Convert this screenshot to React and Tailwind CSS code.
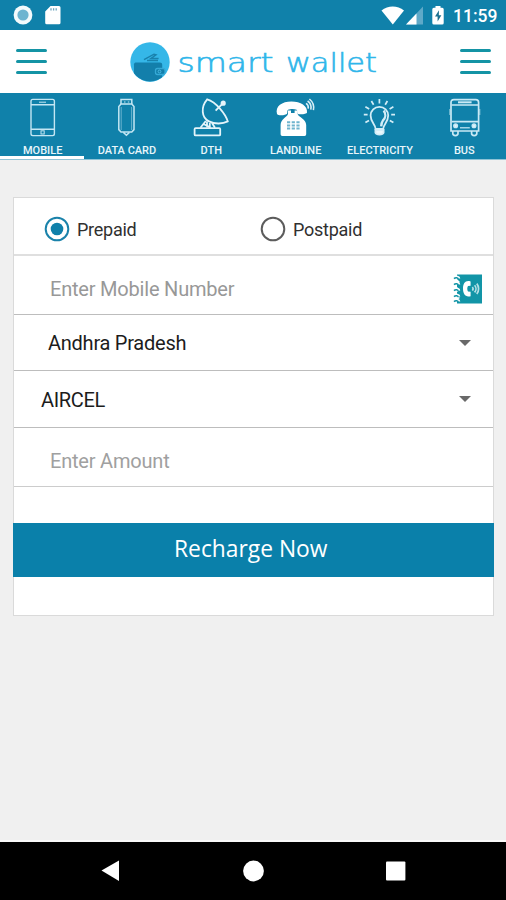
import React, { useState } from "react"

const MobileIcon = () => (
  <svg width="48" height="42" viewBox="0 0 48 42" fill="none" stroke="#c3e6f3" strokeWidth="1.4">
    <rect x="13" y="3.4" width="23.4" height="36.2" rx="1.8" />
    <path d="M13 8.8h23.4M13 33.2h23.4" />
    <path d="M21 6.2h7" strokeWidth="1" />
    <rect x="23" y="34.8" width="3.2" height="3.2" strokeWidth="1" />
  </svg>
)

const DataCardIcon = () => (
  <svg width="48" height="42" viewBox="0 0 48 42" fill="none" stroke="#c3e6f3" strokeWidth="1.5">
    <path d="M19 8V3.6h10.8V8" />
    <path d="M22 6h1.5M25.8 6h1.5" strokeWidth="1.2" />
    <path d="M19 8h10.8l2.2 2.6v23l-2.2 2.4H19l-2.2-2.4v-23z" />
    <path d="M19.2 11v23M29.6 11v23" strokeWidth="1" opacity="0.5" />
    <path d="M21.4 36.4l3 2.8 3-2.8" />
  </svg>
)

const DishIcon = () => (
  <svg width="48" height="42" viewBox="0 0 48 42" fill="none" stroke="#e4f4fa" strokeWidth="1.8">
    <path d="M20.2 3.4C13.6 11 14.4 21.6 22 25.4c6 3 13.6 2.6 18.8 0C38.5 18 29 6 20.2 3.4z" />
    <path d="M28.6 14.6l6.8-6.8" />
    <circle cx="36.2" cy="7.2" r="1.7" fill="#e4f4fa" />
    <path d="M18.8 25l-5.4 6.8M25 27l3 4.8M20 25.6v6M22.8 27v5M17 28.2l6.5 3.4" />
    <rect x="7.6" y="32.2" width="25.6" height="7.2" rx="1" />
  </svg>
)

const LandlineIcon = () => (
  <svg width="48" height="42" viewBox="0 0 48 42">
    <path
      d="M6 18C4 10 11 5.4 20.400 5.400s16.400 4.400 15.600 11.200c-.2 1.800-9 2.600-9.600.6-.4-1.600 0-3-.8-3.400-2.400-1-6.400-.8-8.600 0-1 .6-.4 2.800-1 4-.8 1.600-9.200 2.400-10 .2z"
      fill="#fff"
    />
    <path d="M17 14.400h3v2.600h3.600v-2.600h3V18c1 3.400 8.600 4.800 8.600 11v9c0 1.200-.6 2-1.600 2H11.400c-1.200 0-1.800-.8-1.800-2v-9c0-6.200 6.400-7.600 7.400-11z" fill="#fff" />
    <path d="M16 26.200h12.600M16 29.400h12.600M16 32.600h12.600" stroke="#6fb4ce" strokeWidth="2" strokeDasharray="3.200 1.500" />
    <path d="M35 7.400c2 1.200 2.600 3 2.200 5.200M36.600 5c3 2 4 5 3.200 8.600M38.400 3c3.400 2.800 5 6.600 4 11.200" stroke="#d8eef6" strokeWidth="1.600" fill="none" />
  </svg>
)

const BulbIcon = () => (
  <svg width="48" height="42" viewBox="0 0 48 42" fill="none" stroke="#d3edf7" strokeWidth="1.800">
    <path d="M20.600 33c-.2-5-5-6.600-5-13.400a8.800 8.800 0 0117.600 0c0 6.800-4.800 8.400-5 13.400z" />
    <path d="M28.600 14.600c2.600 3 2 7-.6 9.800-1.200 1.600-1.600 3.600-1.800 6" strokeWidth="2.400" />
    <path d="M20.400 34h8.200v2.800c-.8 2.400-7.400 2.400-8.200 0z" fill="#e9f7fc" />
    <path
      d="M24.400 7.400V3M18.600 8.800L16.400 5M30.200 8.800L32.400 5M14.200 13l-3.800-2.200M34.600 13l3.800-2.200M12.600 18.600H8.800M36.200 18.600H40M14 24.400l-3.600 2.200M34.800 24.400l3.600 2.200"
      strokeWidth="1.700"
    />
  </svg>
)

const BusIcon = () => (
  <svg width="48" height="42" viewBox="0 0 48 42" fill="none" stroke="#c9e9f5" strokeWidth="1.700">
    <path d="M11 35V6.400c0-1.800 1-2.800 2.800-2.800h22c1.800 0 2.800 1 2.800 2.800V35z" />
    <path d="M11.600 9h26.600M11.600 25.600h26.600" />
    <path d="M18 6.300h13.600" strokeWidth="2" />
    <circle cx="15.600" cy="29.800" r="1.700" fill="#e9f7fc" />
    <circle cx="34" cy="29.800" r="1.700" fill="#e9f7fc" />
    <path d="M20 31.800h9.800" strokeWidth="1.200" />
    <path d="M12.800 35v2.600c0 2.600 5.200 2.600 5.200 0V35M31.600 35v2.600c0 2.600 5.200 2.600 5.200 0V35" />
    <path d="M9.800 13v6M39.800 13v6" strokeWidth="1" opacity="0.7" />
  </svg>
)

const tabs = [
  { name: "MOBILE", Icon: MobileIcon },
  { name: "DATA CARD", Icon: DataCardIcon },
  { name: "DTH", Icon: DishIcon },
  { name: "LANDLINE", Icon: LandlineIcon },
  { name: "ELECTRICITY", Icon: BulbIcon },
  { name: "BUS", Icon: BusIcon },
]

const StatusBar = () => (
  <div className="flex h-[30px] shrink-0 items-center justify-between bg-[#1081aa] pl-[13px] pr-[9px]">
    <div className="flex items-center gap-[12px]">
      <svg width="20" height="20" viewBox="0 0 20 20">
        <circle cx="10" cy="10" r="9.400" fill="#f4fafc" />
        <circle cx="10" cy="10" r="5.600" fill="#6db4d0" />
      </svg>
      <svg width="16" height="20" viewBox="0 0 16 20">
        <path d="M5.500 1H14a1.500 1.500 0 011.500 1.500v15.200a1.500 1.500 0 01-1.500 1.500H1.700a1.500 1.500 0 01-1.500-1.500V6.500z" fill="#fff" />
        <path d="M6 3.200v2.400M8.600 3.200v2.400M11.200 3.200v2.400" stroke="#6ea6bd" strokeWidth="1.300" />
      </svg>
    </div>
    <div className="flex items-center">
      <svg width="64" height="20" viewBox="0 0 64 20">
        <path d="M.5 5.500C7 .2 16.500.2 23 5.500L11.800 19.400z" fill="#fff" />
        <path d="M42 1.500v18H25z" fill="#5ea9c8" />
        <path d="M35.500 8.400v11.100H25z" fill="#fff" />
        <path d="M54.500 2.800V1h5v1.800h1.700a1.500 1.500 0 011.500 1.500v13.700a1.500 1.500 0 01-1.500 1.500h-8.400a1.500 1.500 0 01-1.500-1.500V4.300a1.500 1.500 0 011.500-1.500z" fill="#fff" />
        <path d="M58 5.200l-4 6.400h2.600v5l3.800-6.400h-2.600z" fill="#1b7090" />
      </svg>
      <span className="ml-[8px] mt-[2px] w-[44px] text-[17.500px] font-medium leading-[20px] text-white">11:59</span>
    </div>
  </div>
)

const MenuButton = () => (
  <button className="flex w-[31px] flex-col gap-[8px]" aria-label="Menu">
    <span className="h-[3px] w-full rounded-full bg-[#1494a5]" />
    <span className="h-[3px] w-full rounded-full bg-[#1494a5]" />
    <span className="h-[3px] w-full rounded-full bg-[#1494a5]" />
  </button>
)

const Logo = () => (
  <svg className="ml-[2px]" width="250" height="42" viewBox="0 0 250 42">
    <defs>
      <clipPath id="badge">
        <circle cx="20" cy="21" r="19.500" />
      </clipPath>
    </defs>
    <circle cx="20" cy="21" r="19.700" fill="#35b7e8" />
    <g clipPath="url(#badge)">
      <path d="M4 23.500c0-1.500 1-2 2.200-2h23.600c1.500 0 2.400.8 2.400 2.200V36c0 3-1 5-4 5H4z" fill="#137fab" />
      <path d="M14 18.600l10-5.400 2 .6-5 3.600h7.600M17 19.600h11" stroke="#1982ad" strokeWidth="1.500" fill="none" />
      <rect x="25.500" y="27.500" width="9.500" height="6" rx="2" fill="#137fab" stroke="#35a9d6" strokeWidth="1.300" />
      <circle cx="29.500" cy="30.500" r="1.400" fill="none" stroke="#4ab8e2" />
    </g>
    <g fill="#2fb6ea" stroke="#2fb6ea" strokeWidth="0.600" fontSize="26" fontWeight="200" fontFamily="'DejaVu Sans', sans-serif">
      <text x="47.500" y="30.500" textLength="96" lengthAdjust="spacingAndGlyphs">smart</text>
      <text x="156" y="30.500" textLength="91" lengthAdjust="spacingAndGlyphs">wallet</text>
    </g>
  </svg>
)

const Radio = ({ label, checked, onClick }) => (
  <button className="flex w-[216px] items-center gap-[7px]" onClick={onClick}>
    <svg width="26" height="26" viewBox="0 0 26 26">
      <circle cx="13" cy="13" r="11.300" fill="none" stroke={checked ? "#1a82aa" : "#5c5c5c"} strokeWidth="2" />
      {checked && <circle cx="13" cy="13" r="6.300" fill="#0f80aa" />}
    </svg>
    <span className="mt-px text-[18px] leading-[22px] tracking-[-0.25px] text-[#303030]">{label}</span>
  </button>
)

const Caret = () => (
  <svg width="12" height="6" viewBox="0 0 12 6">
    <path d="M0 0h12L6 6z" fill="#696969" />
  </svg>
)

const ContactsIcon = () => (
  <svg width="30" height="30" viewBox="0 0 30 30">
    <path d="M4 .5h25v29H4V26l3-2-3-3v-3l3-2-3-3v-3l3-2-3-3z" fill="#1295a7" />
    <path
      d="M1.200 3.600c2-1.600 5-.6 5 1M1.200 9.600c2-1.600 5-.6 5 1M1.200 15.600c2-1.600 5-.6 5 1M1.200 21.600c2-1.600 5-.6 5 1M1.200 26.600c2-1.600 5-.6 5 1"
      stroke="#fff"
      strokeWidth="2.200"
      fill="none"
    />
    <path
      d="M1 4.600c1.600-1.600 4.200-1 4.200.6M1 10.600c1.600-1.600 4.200-1 4.200.6M1 16.600c1.600-1.600 4.200-1 4.200.6M1 22.600c1.600-1.600 4.200-1 4.200.6M1 27.600c1.600-1.600 4.200-1 4.200.6"
      stroke="#1295a7"
      strokeWidth="1.500"
      fill="none"
    />
    <path d="M17.600 7.400c-5-1.600-7.600 1.800-7.600 7.200s2.600 9.200 7.600 7.600v-4.400l-2.600-.2c-1-1.400-1-4.200 0-5.600l2.600-.2z" fill="#fff" />
    <path d="M19.400 13c.8 1 .8 2.600 0 3.600M21.600 11.200c1.800 2 1.800 5.200 0 7.200M23.800 9.600c2.400 3 2.400 7.400 0 10.400" stroke="#b5e0e6" strokeWidth="1.700" fill="none" />
  </svg>
)

const App = () => {
  const [plan, setPlan] = useState("Prepaid")

  return (
    <div className="flex h-[900px] w-[506px] flex-col overflow-hidden bg-[#f0f0f0] font-['Roboto',sans-serif]">
      <StatusBar />
      <header className="flex h-[63px] shrink-0 items-center justify-between bg-white pl-[16px] pr-[15px]">
        <MenuButton />
        <Logo />
        <MenuButton />
      </header>
      <nav className="grid h-[67px] shrink-0 grid-cols-6 border-b border-[#8fc3d6] bg-[#1081aa]">
        {tabs.map(({ name, Icon }, i) => (
          <div
            key={name}
            className={
              i === 0
                ? "flex flex-col items-center border-b-3 border-white pt-[3px]"
                : "flex flex-col items-center pt-[3px]"
            }
          >
            <Icon />
            <span className="mt-[8px] whitespace-nowrap pl-px text-[11px] font-medium leading-[10px] text-[#e8f6fb]">{name}</span>
          </div>
        ))}
      </nav>

      <main className="flex-1 pl-[13px] pr-[12px] pt-[37px]">
        <div className="h-[419px] border border-[#dadada] bg-white">
          <div className="flex h-[58px] items-center border-b-2 border-[#dfdfdf] pl-[30px] pt-[6px]">
            <Radio label="Prepaid" checked={plan === "Prepaid"} onClick={() => setPlan("Prepaid")} />
            <Radio label="Postpaid" checked={plan === "Postpaid"} onClick={() => setPlan("Postpaid")} />
          </div>
          <div className="flex h-[59px] items-center justify-between border-b border-[#bdbdbd] pl-[36px] pr-[10px] pt-[7px]">
            <span className="text-[20px] leading-[24px] tracking-[-0.2px] text-[#989898]">Enter Mobile Number</span>
            <ContactsIcon />
          </div>
          <div className="flex h-[56px] items-center justify-between border-b border-[#bdbdbd] pl-[34px] pr-[22px]">
            <span className="text-[20px] leading-[24px] tracking-[-0.25px] text-[#1c1c1c]">Andhra Pradesh</span>
            <Caret />
          </div>
          <div className="flex h-[57px] items-center justify-between border-b border-[#bdbdbd] pl-[27px] pr-[22px]">
            <span className="mt-px text-[20px] leading-[24px] tracking-[-0.35px] text-[#1c1c1c]">AIRCEL</span>
            <Caret />
          </div>
          <div className="flex h-[59px] items-center border-b border-[#cccccc] pl-[36px] pt-[7px]">
            <span className="text-[20px] leading-[24px] tracking-[-0.2px] text-[#a0a0a0]">Enter Amount</span>
          </div>
          <button className="-mx-px mt-[36px] flex h-[54px] w-[481px] items-center justify-center bg-[#0a80aa] pb-[5px] pr-[5px] font-['Open_Sans',sans-serif] text-[24px] text-white">
            <span className="scale-x-95">Recharge Now</span>
          </button>
        </div>
      </main>

      <footer className="flex h-[60px] shrink-0 items-center justify-center border-t-2 border-[#fafafa] bg-black">
        <svg width="306" height="22" viewBox="0 0 306 22">
          <path d="M1.500 10.500L19 .6v20.400z" fill="#fff" />
          <circle cx="153.500" cy="11" r="10.400" fill="#fff" />
          <rect x="286" y="1.500" width="19.400" height="19" rx="1" fill="#fff" />
        </svg>
      </footer>
    </div>
  )
}

export default App
